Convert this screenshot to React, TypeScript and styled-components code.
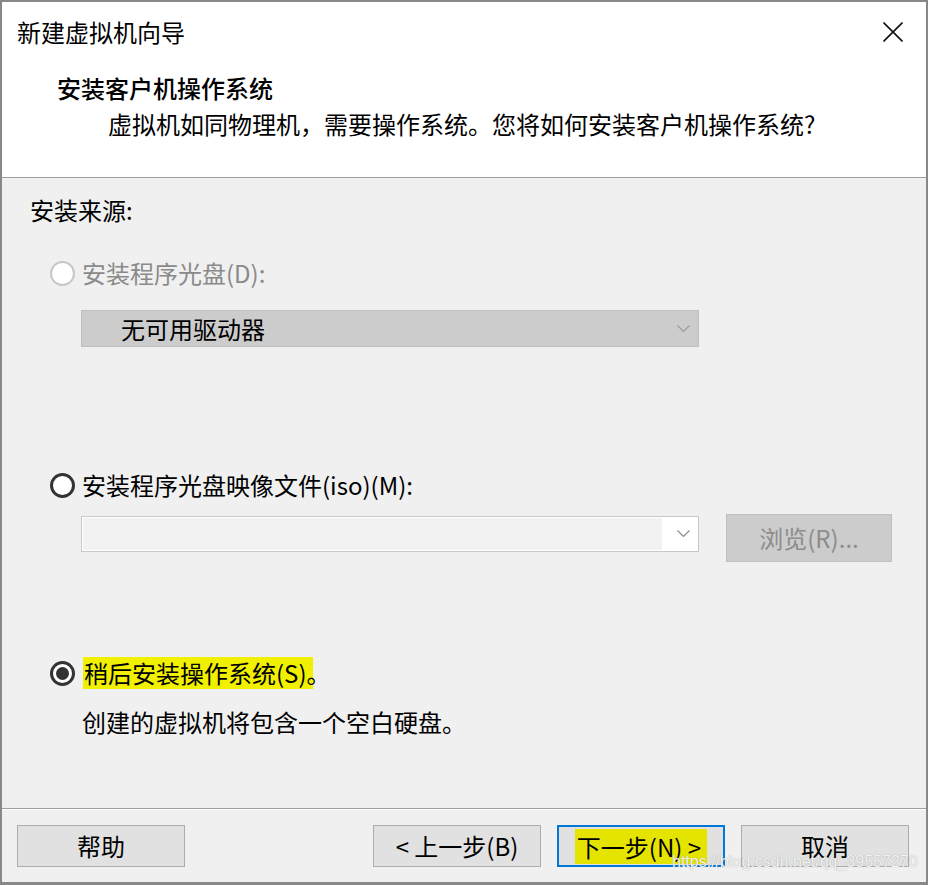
import React from "react";
import styled, { createGlobalStyle } from "styled-components";

const Global = createGlobalStyle`
  html, body { margin: 0; padding: 0; background: #ffffff; }
  body { font-family: "Noto Sans CJK SC", "Noto Sans", sans-serif; }
  * { box-sizing: border-box; }
`;

const Window = styled.div`
  position: relative;
  width: 928px;
  height: 885px;
  border-top: 2px solid #888888;
  border-left: 2px solid #888888;
  border-right: 2px solid #888888;
  border-bottom: 3px solid #888888;
  display: flex;
  flex-direction: column;
  background: #f0f0f0;
  font-family: "Noto Sans CJK SC", "Noto Sans", sans-serif;
  font-size: 24px;
  color: #000000;
`;

const Header = styled.div`
  flex-shrink: 0;
  height: 176px;
  background: #ffffff;
  border-bottom: 1px solid #a0a0a0;
`;

const TitleBar = styled.div`
  height: 60px;
  display: flex;
  align-items: center;
  justify-content: space-between;
  padding: 0 23px 0 15px;
`;

const TitleText = styled.div`
  line-height: 32px;
`;

const CloseButton = styled.div`
  width: 20px;
  height: 20px;
  display: flex;
`;

const HeadBlock = styled.div`
  margin-top: 10px;
  padding-left: 55px;
`;

const Heading = styled.div`
  line-height: 32px;
  font-weight: 500;
`;

const Subtitle = styled.div`
  margin-top: 4px;
  padding-left: 51px;
  line-height: 32px;
`;

const Body = styled.div`
  flex: 1;
  padding-left: 28px;
  display: flex;
  flex-direction: column;
  align-items: flex-start;
`;

const SourceLabel = styled.div`
  margin-top: 16px;
  line-height: 32px;
`;

const RadioRow = styled.div<{ $top: number }>`
  margin-top: ${(p) => p.$top}px;
  margin-left: 20px;
  height: 32px;
  display: flex;
  align-items: center;
  gap: 7px;
`;

const RadioCircle = styled.span<{ $disabled?: boolean }>`
  width: 25px;
  height: 25px;
  border-radius: 50%;
  border: ${(p) => (p.$disabled ? "2px solid #c6c6c6" : "3px solid #333333")};
  background: #ffffff;
  display: flex;
  align-items: center;
  justify-content: center;
  flex-shrink: 0;
`;

const RadioDot = styled.span`
  width: 13px;
  height: 13px;
  border-radius: 50%;
  background: #333333;
`;

const RadioLabel = styled.span<{ $disabled?: boolean }>`
  line-height: 32px;
  color: ${(p) => (p.$disabled ? "#8a8a8a" : "#000000")};
  white-space: nowrap;
`;

const Marker = styled.span`
  display: inline-block;
  width: 230px;
  background: #f0f000;
  line-height: 32px;
  padding-left: 1px;
  margin-left: 1px;
  white-space: nowrap;
`;

const Combo = styled.div<{ $disabled?: boolean; $top: number }>`
  margin-top: ${(p) => p.$top}px;
  margin-left: 51px;
  width: 618px;
  height: 37px;
  border: 1px solid ${(p) => (p.$disabled ? "#bfbfbf" : "#c8c8c8")};
  background: ${(p) => (p.$disabled ? "#cccccc" : "#ffffff")};
  display: flex;
  align-items: center;
  padding: ${(p) => (p.$disabled ? "0 8px 0 39px" : "1px 8px 1px 1px")};
`;

const ComboText = styled.div`
  flex: 1;
  line-height: 32px;
`;

const ComboField = styled.div`
  flex: 1;
  align-self: stretch;
  margin-right: 15px;
  background: #f2f2f2;
`;

const Chevron = styled.svg`
  width: 13px;
  height: 8px;
  flex-shrink: 0;
`;

const FileRow = styled.div`
  margin-top: 13px;
  display: flex;
  align-items: flex-start;
`;

const FileCombo = styled(Combo)`
  height: 36px;
`;

const BrowseButton = styled.div`
  margin-left: 27px;
  width: 166px;
  height: 48px;
  border: 1px solid #bfbfbf;
  background: #cccccc;
  color: #8c8c8c;
  display: flex;
  align-items: center;
  justify-content: center;
  line-height: 32px;
`;

const Description = styled.div`
  margin-top: 17px;
  margin-left: 52px;
  line-height: 32px;
`;

const Footer = styled.div`
  flex-shrink: 0;
  height: 74px;
  border-top: 1px solid #a0a0a0;
  box-shadow: inset 0 1px 0 #ffffff;
  padding: 16px 17px 0 15px;
  display: flex;
  align-items: flex-start;
`;

const Spacer = styled.div`
  flex: 1;
`;

const Button = styled.div<{ $primary?: boolean; $gapLeft?: number }>`
  width: 168px;
  height: 42px;
  margin-left: ${(p) => p.$gapLeft ?? 0}px;
  background: #e1e1e1;
  border: ${(p) => (p.$primary ? "2px solid #0078d7" : "1px solid #adadad")};
  display: flex;
  align-items: center;
  justify-content: center;
  line-height: 32px;
  white-space: nowrap;
`;

const ButtonMarker = styled.span`
  background: #e4e400;
  line-height: 35px;
  padding: 0 6px 0 2px;
`;

const Watermark = styled.div`
  position: absolute;
  left: 670px;
  top: 851px;
  font-family: "Liberation Sans", Arial, sans-serif;
  font-size: 16px;
  line-height: 18px;
  color: rgba(255, 255, 255, 0.9);
  text-shadow: 0 0 1px rgba(120, 120, 120, 0.8);
  pointer-events: none;
  white-space: nowrap;
`;

const ChevronIcon = ({ color }: { color: string }) => (
  <Chevron viewBox="0 0 13 8">
    <polyline points="0.5,0.5 6.5,6.5 12.5,0.5" fill="none" stroke={color} strokeWidth="1.2" />
  </Chevron>
);

export default function App() {
  return (
    <>
      <Global />
      <Window>
        <Header>
          <TitleBar>
            <TitleText>新建虚拟机向导</TitleText>
            <CloseButton>
              <svg width="20" height="20" viewBox="0 0 20 20">
                <path d="M0.5 0.5 L19.5 19.5 M19.5 0.5 L0.5 19.5" stroke="#111" strokeWidth="1.6" fill="none" />
              </svg>
            </CloseButton>
          </TitleBar>
          <HeadBlock>
            <Heading>安装客户机操作系统</Heading>
            <Subtitle>虚拟机如同物理机，需要操作系统。您将如何安装客户机操作系统?</Subtitle>
          </HeadBlock>
        </Header>
        <Body>
          <SourceLabel>安装来源:</SourceLabel>
          <RadioRow $top={31}>
            <RadioCircle $disabled />
            <RadioLabel $disabled>安装程序光盘(D):</RadioLabel>
          </RadioRow>
          <Combo $disabled $top={21}>
            <ComboText>无可用驱动器</ComboText>
            <ChevronIcon color="#9a9a9a" />
          </Combo>
          <RadioRow $top={122}>
            <RadioCircle />
            <RadioLabel>安装程序光盘映像文件(iso)(M):</RadioLabel>
          </RadioRow>
          <FileRow>
            <FileCombo $top={2}>
              <ComboField />
              <ChevronIcon color="#8a8a8a" />
            </FileCombo>
            <BrowseButton>浏览(R)...</BrowseButton>
          </FileRow>
          <RadioRow $top={95}>
            <RadioCircle>
              <RadioDot />
            </RadioCircle>
            <RadioLabel>
              <Marker>稍后安装操作系统(S)。</Marker>
            </RadioLabel>
          </RadioRow>
          <Description>创建的虚拟机将包含一个空白硬盘。</Description>
        </Body>
        <Footer>
          <Button>帮助</Button>
          <Spacer />
          <Button>&lt; 上一步(B)</Button>
          <Button $primary $gapLeft={16}>
            <ButtonMarker>下一步(N) &gt;</ButtonMarker>
          </Button>
          <Button $gapLeft={16}>取消</Button>
        </Footer>
        <Watermark>https://blog.csdn.net/qq_39557270</Watermark>
      </Window>
    </>
  );
}
